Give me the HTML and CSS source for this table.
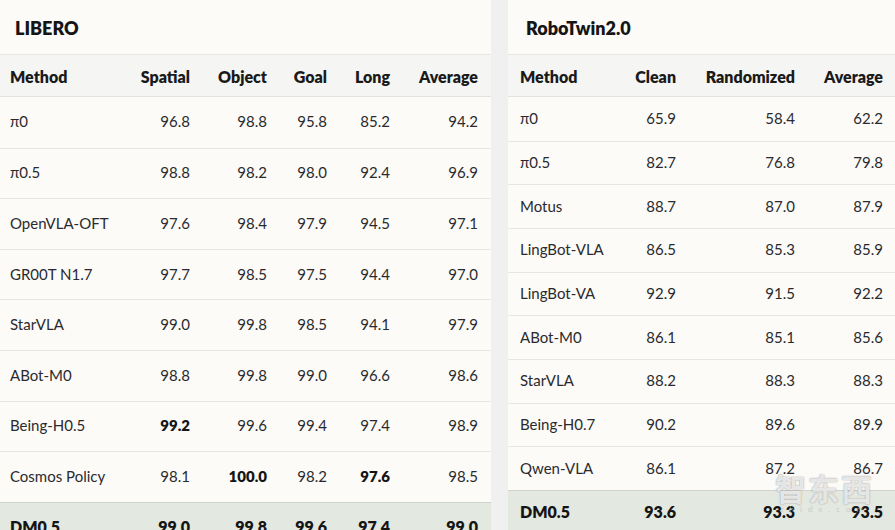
FILE: index.html
```html
<!DOCTYPE html>
<html>
<head>
<meta charset="utf-8">
<link rel="stylesheet" href="styles.css">
</head>
<body>
<div class="page">
  <section class="panel libero">
    <h2 class="title">LIBERO</h2>
    <div class="table">
      <div class="row head"><div class="c name">Method</div><div class="c">Spatial</div><div class="c">Object</div><div class="c">Goal</div><div class="c">Long</div><div class="c">Average</div></div>
      <div class="row"><div class="c name">π0</div><div class="c">96.8</div><div class="c">98.8</div><div class="c">95.8</div><div class="c">85.2</div><div class="c">94.2</div></div>
      <div class="row"><div class="c name">π0.5</div><div class="c">98.8</div><div class="c">98.2</div><div class="c">98.0</div><div class="c">92.4</div><div class="c">96.9</div></div>
      <div class="row"><div class="c name">OpenVLA-OFT</div><div class="c">97.6</div><div class="c">98.4</div><div class="c">97.9</div><div class="c">94.5</div><div class="c">97.1</div></div>
      <div class="row"><div class="c name">GR00T N1.7</div><div class="c">97.7</div><div class="c">98.5</div><div class="c">97.5</div><div class="c">94.4</div><div class="c">97.0</div></div>
      <div class="row"><div class="c name">StarVLA</div><div class="c">99.0</div><div class="c">99.8</div><div class="c">98.5</div><div class="c">94.1</div><div class="c">97.9</div></div>
      <div class="row"><div class="c name">ABot-M0</div><div class="c">98.8</div><div class="c">99.8</div><div class="c">99.0</div><div class="c">96.6</div><div class="c">98.6</div></div>
      <div class="row"><div class="c name">Being-H0.5</div><div class="c best">99.2</div><div class="c">99.6</div><div class="c">99.4</div><div class="c">97.4</div><div class="c">98.9</div></div>
      <div class="row"><div class="c name">Cosmos Policy</div><div class="c">98.1</div><div class="c best">100.0</div><div class="c">98.2</div><div class="c best">97.6</div><div class="c">98.5</div></div>
      <div class="row ours"><div class="c name">DM0.5</div><div class="c">99.0</div><div class="c">99.8</div><div class="c">99.6</div><div class="c">97.4</div><div class="c">99.0</div></div>
    </div>
  </section>
  <section class="panel robotwin">
    <h2 class="title">RoboTwin2.0</h2>
    <div class="table">
      <div class="row head"><div class="c name">Method</div><div class="c">Clean</div><div class="c">Randomized</div><div class="c">Average</div></div>
      <div class="row"><div class="c name">π0</div><div class="c">65.9</div><div class="c">58.4</div><div class="c">62.2</div></div>
      <div class="row"><div class="c name">π0.5</div><div class="c">82.7</div><div class="c">76.8</div><div class="c">79.8</div></div>
      <div class="row"><div class="c name">Motus</div><div class="c">88.7</div><div class="c">87.0</div><div class="c">87.9</div></div>
      <div class="row"><div class="c name">LingBot-VLA</div><div class="c">86.5</div><div class="c">85.3</div><div class="c">85.9</div></div>
      <div class="row"><div class="c name">LingBot-VA</div><div class="c">92.9</div><div class="c">91.5</div><div class="c">92.2</div></div>
      <div class="row"><div class="c name">ABot-M0</div><div class="c">86.1</div><div class="c">85.1</div><div class="c">85.6</div></div>
      <div class="row"><div class="c name">StarVLA</div><div class="c">88.2</div><div class="c">88.3</div><div class="c">88.3</div></div>
      <div class="row"><div class="c name">Being-H0.7</div><div class="c">90.2</div><div class="c">89.6</div><div class="c">89.9</div></div>
      <div class="row"><div class="c name">Qwen-VLA</div><div class="c">86.1</div><div class="c">87.2</div><div class="c">86.7</div></div>
      <div class="row ours"><div class="c name">DM0.5</div><div class="c">93.6</div><div class="c">93.3</div><div class="c">93.5</div></div>
    </div>
    <div class="watermark"><span class="wm-cn">智东西</span><span class="wm-en">zhidx.com</span></div>
  </section>
</div>
</body>
</html>
```
FILE: styles.css
```css
html, body {
  margin: 0;
  padding: 0;
  background: #f0f0f0;
  overflow: hidden;
}
.page {
  display: flex;
  gap: 17px;
  width: 895px;
  height: 530px;
  overflow: hidden;
  font-family: Lato, "Noto Sans", sans-serif;
  color: #2a2a2e;
}
.panel {
  background: #fcfbf8;
  height: 560px;
  position: relative;
}
.libero { width: 491px; }
.robotwin { flex: 1; }
.title {
  margin: 0;
  height: 54px;
  box-sizing: border-box;
  display: flex;
  align-items: center;
  font-size: 18px;
  font-weight: 800;
  color: #151515;
  padding-top: 2px;
}
.libero .title { padding-left: 15px; }
.robotwin .title { padding-left: 18px; }
.row {
  display: grid;
  align-items: center;
  box-sizing: border-box;
  border-top: 1px solid #e7e6e3;
  font-size: 15px;
  white-space: nowrap;
  padding-bottom: 2px;
}
.libero .row {
  grid-template-columns: 130px 72px 77px 60px 63px 88px;
  height: 50.6px;
}
.robotwin .row {
  grid-template-columns: 92px 88px 119px 88px;
  height: 43.66px;
}
.row.head {
  background: #f5f5f4;
  height: 43px;
  font-weight: 800;
  font-size: 16px;
  color: #1a1a1a;
  border-bottom: 1px solid #e2e2e0;
  padding-top: 1px;
  padding-bottom: 0;
}
.row.head + .row { border-top: none; }
.c {
  text-align: right;
  padding-right: 12px;
}
.c.name {
  text-align: left;
  padding-right: 0;
}
.libero .c.name { padding-left: 10px; }
.robotwin .c.name { padding-left: 12px; }
.best { font-weight: 800; color: #151515; }
.row.ours {
  background: #e3e8e0;
  border-top: 1px solid #cfd3cc;
  font-weight: 800;
  color: #151515;
  font-size: 16px;
}
.watermark {
  position: absolute;
  left: 267px;
  top: 470px;
  display: flex;
  flex-direction: column;
  align-items: center;
  pointer-events: none;
}
.wm-cn {
  font-family: "Noto Sans CJK SC", sans-serif;
  font-size: 31px;
  font-weight: 700;
  color: rgba(255,255,255,0.8);
  text-shadow: 0 0 1px rgba(110,110,110,0.7), 0 0 2px rgba(150,150,150,0.4);
  letter-spacing: 2px;
  line-height: 36px;
}
.wm-en {
  font-size: 8px;
  letter-spacing: 6px;
  color: rgba(190,190,190,0.7);
  line-height: 8px;
  margin-top: -1px;
}
```
